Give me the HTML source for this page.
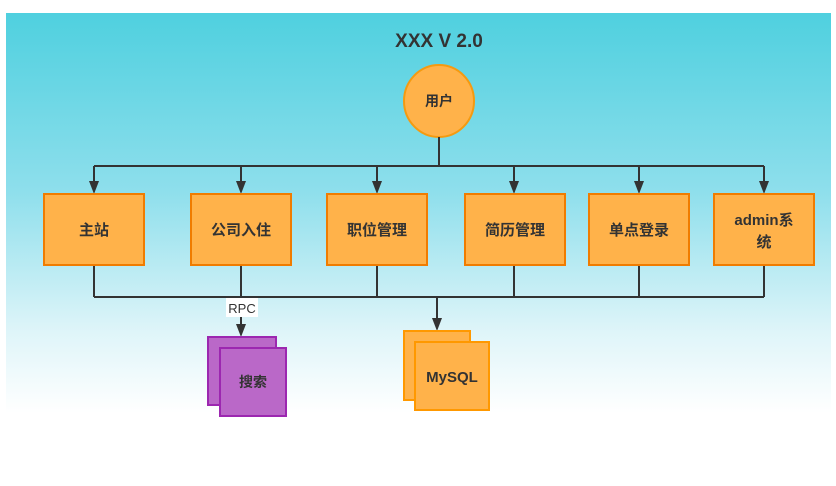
<!DOCTYPE html>
<html><head><meta charset="utf-8"><style>
html,body{margin:0;padding:0;background:#fff;width:836px;height:486px;overflow:hidden}
svg text{font-family:"Liberation Sans","Noto Sans CJK SC",sans-serif;fill:#333}
</style></head><body>
<svg width="836" height="486" viewBox="0 0 836 486" xmlns="http://www.w3.org/2000/svg">
<defs>
<linearGradient id="g" x1="0" y1="0" x2="0" y2="1">
<stop offset="0" stop-color="#4fd0df"/>
<stop offset="0.45" stop-color="#8fdfec"/>
<stop offset="0.8" stop-color="#dff5f9"/>
<stop offset="1" stop-color="#ffffff"/>
</linearGradient>
</defs>
<rect x="6" y="13" width="825" height="400" fill="url(#g)"/>
<text x="439" y="47" font-size="19" font-weight="bold" text-anchor="middle">XXX V 2.0</text>
<ellipse cx="439" cy="101" rx="35" ry="36" fill="#ffb24a" stroke="#f59a10" stroke-width="2"/>
<text x="439" y="106" font-size="14" font-weight="bold" text-anchor="middle">用户</text>
<g stroke="#333" stroke-width="2" fill="none">
<line x1="439" y1="137" x2="439" y2="166"/>
<line x1="94" y1="166" x2="764" y2="166"/>
<line x1="94" y1="166" x2="94" y2="184"/>
<line x1="241" y1="166" x2="241" y2="184"/>
<line x1="377" y1="166" x2="377" y2="184"/>
<line x1="514" y1="166" x2="514" y2="184"/>
<line x1="639" y1="166" x2="639" y2="184"/>
<line x1="764" y1="166" x2="764" y2="184"/>
<line x1="94" y1="265" x2="94" y2="297"/>
<line x1="241" y1="265" x2="241" y2="298"/>
<line x1="377" y1="265" x2="377" y2="297"/>
<line x1="514" y1="265" x2="514" y2="297"/>
<line x1="639" y1="265" x2="639" y2="297"/>
<line x1="764" y1="265" x2="764" y2="297"/>
<line x1="94" y1="297" x2="764" y2="297"/>
<line x1="437" y1="297" x2="437" y2="320"/>
<line x1="241" y1="316" x2="241" y2="326"/>
</g>
<g fill="#333">
<path d="M89,181 L99,181 L94,194 Z"/>
<path d="M236,181 L246,181 L241,194 Z"/>
<path d="M372,181 L382,181 L377,194 Z"/>
<path d="M509,181 L519,181 L514,194 Z"/>
<path d="M634,181 L644,181 L639,194 Z"/>
<path d="M759,181 L769,181 L764,194 Z"/>
<path d="M432,318 L442,318 L437,331 Z"/>
<path d="M236,324 L246,324 L241,337 Z"/>
</g>
<g fill="#ffb24a" stroke="#f07c00" stroke-width="2">
<rect x="44" y="194" width="100" height="71"/>
<rect x="191" y="194" width="100" height="71"/>
<rect x="327" y="194" width="100" height="71"/>
<rect x="465" y="194" width="100" height="71"/>
<rect x="589" y="194" width="100" height="71"/>
<rect x="714" y="194" width="100" height="71"/>
</g>
<g font-size="15" font-weight="bold" text-anchor="middle">
<text x="94" y="235">主站</text>
<text x="241" y="235">公司入住</text>
<text x="377" y="235">职位管理</text>
<text x="515" y="235">简历管理</text>
<text x="639" y="235">单点登录</text>
<text x="764" y="225">admin系</text>
<text x="764" y="247">统</text>
</g>
<rect x="226" y="298" width="32" height="19" fill="#fff"/>
<text x="242" y="313" font-size="13" text-anchor="middle">RPC</text>
<g fill="#ba68c8" stroke="#9c27b0" stroke-width="2">
<rect x="208" y="337" width="68" height="68"/>
<rect x="220" y="348" width="66" height="68"/>
</g>
<text x="253" y="387" font-size="14" font-weight="bold" text-anchor="middle">搜索</text>
<g fill="#ffb24a" stroke="#ff9800" stroke-width="2">
<rect x="404" y="331" width="66" height="69"/>
<rect x="415" y="342" width="74" height="68"/>
</g>
<text x="452" y="382" font-size="15" font-weight="bold" text-anchor="middle">MySQL</text>
</svg>
</body></html>
